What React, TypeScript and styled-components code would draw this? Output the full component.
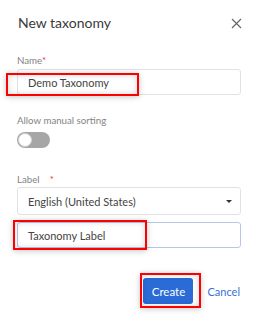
import * as React from "react";
import styled, { createGlobalStyle } from "styled-components";

const GlobalStyle = createGlobalStyle`
  html, body {
    margin: 0;
    padding: 0;
    background: #fff;
  }
  body {
    font-family: "Lato", "Noto Sans", sans-serif;
    color: #333;
  }
`;

interface BoxProps {
  readonly $top: number;
  readonly $left: number;
  readonly $width: number;
  readonly $height: number;
}

const Dialog = styled.div`
  position: relative;
  width: 255px;
  height: 314px;
  box-sizing: border-box;
  padding: 0 14px 0 17px;
  display: flex;
  flex-direction: column;
  overflow: hidden;
`;

const Header = styled.div`
  display: flex;
  align-items: center;
  justify-content: space-between;
  margin-top: 12px;
  height: 22px;
  padding-left: 1px;
`;

const Title = styled.h2`
  margin: 0;
  font-size: 14px;
  font-weight: 400;
  line-height: 22px;
  color: #3a3a3a;
`;

const Close = styled.button`
  border: 0;
  background: none;
  padding: 0;
  width: 12px;
  height: 12px;
  margin-right: -1px;
  display: flex;
  align-items: center;
  justify-content: center;
  cursor: pointer;
`;

const Field = styled.div<{ $gap: number }>`
  position: relative;
  display: flex;
  flex-direction: column;
  margin-top: ${p => p.$gap}px;
`;

const Label = styled.label`
  font-size: 9.7px;
  line-height: 14px;
  color: #848484;
`;

const Req = styled.span<{ $space?: boolean }>`
  color: #e33;
  margin-left: ${p => (p.$space ? 10 : 0)}px;
`;

const Input = styled.div<{ $focused?: boolean; $gap: number; $height: number }>`
  box-sizing: border-box;
  height: ${p => p.$height}px;
  margin-top: ${p => p.$gap}px;
  border: 1px solid ${p => (p.$focused ? "#b4c7e8" : "#e2e2e2")};
  border-radius: 3px;
  display: flex;
  align-items: center;
  justify-content: space-between;
  padding: 0 8px 0 10px;
  font-size: 11px;
  color: #444;
  background: #fff;
`;

const Caret = styled.span`
  width: 0;
  height: 0;
  border-left: 3px solid transparent;
  border-right: 3px solid transparent;
  border-top: 3px solid #333;
`;

const Switch = styled.div`
  box-sizing: border-box;
  margin-top: 5px;
  width: 33px;
  height: 16px;
  border-radius: 8px;
  background: #a6a6a6;
  position: relative;
  &:before {
    content: "";
    position: absolute;
    left: 1px;
    top: 1px;
    width: 14px;
    height: 14px;
    border-radius: 50%;
    background: #fff;
    box-sizing: border-box;
    border: 1px solid #cfcfcf;
  }
`;

const Footer = styled.div`
  position: relative;
  display: flex;
  justify-content: flex-end;
  align-items: center;
  margin-top: 30px;
  gap: 14px;
  padding-right: 1px;
`;

const Primary = styled.button`
  width: 50px;
  height: 26px;
  border: 0;
  border-radius: 3px;
  background: #2a6bd6;
  color: #fff;
  font-family: inherit;
  font-size: 11.5px;
  padding: 0;
`;

const LinkButton = styled.button`
  border: 0;
  background: none;
  padding: 0;
  color: #3a6fd4;
  font-family: inherit;
  font-size: 11px;
`;

const Highlight = styled.div<BoxProps>`
  position: absolute;
  top: ${p => p.$top}px;
  left: ${p => p.$left}px;
  width: ${p => p.$width}px;
  height: ${p => p.$height}px;
  box-sizing: border-box;
  border: 2px solid #f00;
  box-shadow: 0 1px 6px rgba(0, 0, 0, 0.22), inset 0 0 6px rgba(0, 0, 0, 0.16);
  pointer-events: none;
`;

const CloseIcon = () => (
  <svg width="11" height="11" viewBox="0 0 11 11">
    <path d="M1 1 L10 10 M10 1 L1 10" stroke="#666" strokeWidth="1.2" fill="none" />
  </svg>
);

const App = () => (
  <>
    <GlobalStyle />
    <Dialog>
      <Header>
        <Title>New taxonomy</Title>
        <Close aria-label="Close">
          <CloseIcon />
        </Close>
      </Header>

      <Field $gap={19}>
        <Label>
          Name<Req>*</Req>
        </Label>
        <Input $gap={2} $height={26}>
          Demo Taxonomy
        </Input>
        <Highlight $top={20} $left={-11} $width={133} $height={23} />
      </Field>

      <Field $gap={18}>
        <Label>Allow manual sorting</Label>
        <Switch />
      </Field>

      <Field $gap={24}>
        <Label>
          Label<Req $space>*</Req>
        </Label>
        <Input $gap={1} $height={28}>
          English (United States)
          <Caret />
        </Input>
        <Input $gap={7} $height={26} $focused>
          Taxonomy Label
        </Input>
        <Highlight $top={48} $left={-4} $width={134} $height={30} />
      </Field>

      <Footer>
        <Primary>Create</Primary>
        <LinkButton>Cancel</LinkButton>
        <Highlight $top={-5} $left={123} $width={61} $height={35} />
      </Footer>
    </Dialog>
  </>
);

export default App;
